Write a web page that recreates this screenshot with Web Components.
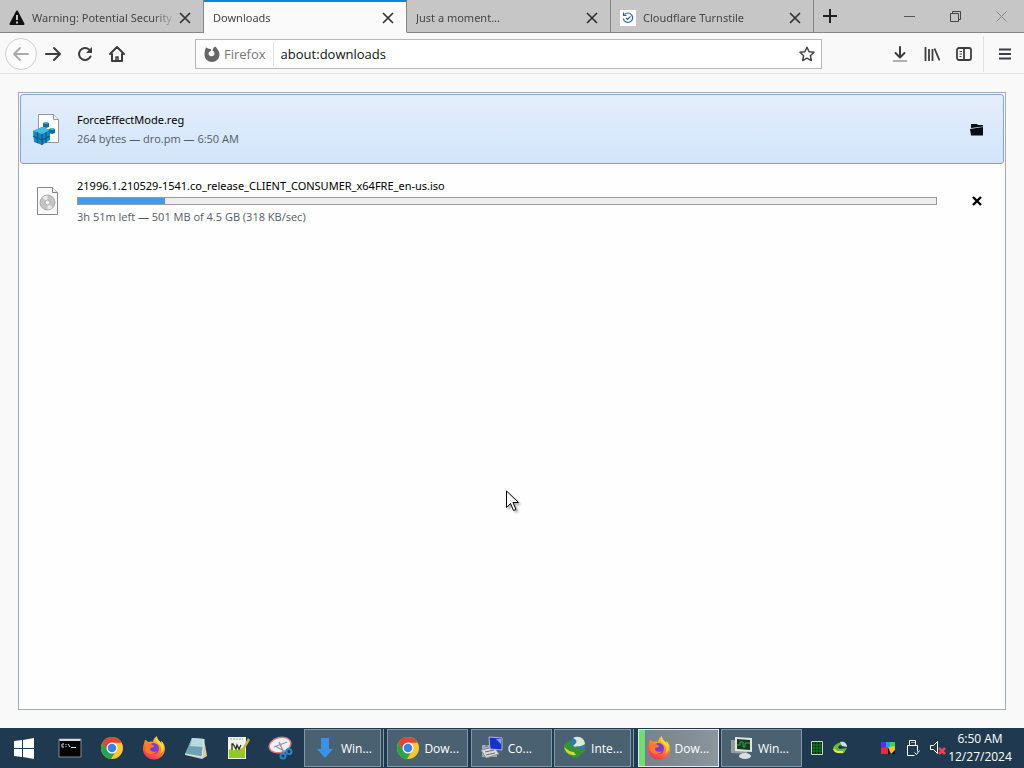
<!DOCTYPE html>
<html lang="en">
<head>
<meta charset="utf-8">
<title>Downloads</title>
<style>
html, body { margin: 0; height: 100%; }
body { font-family: "Open Sans", "Noto Sans", sans-serif; font-size: 12px; overflow: hidden; }
</style>
</head>
<body>
<desktop-screen></desktop-screen>

<script>
const define = (name, html) => {
  const template = document.createElement('template');
  template.innerHTML = html;
  customElements.define(name, class extends HTMLElement {
    constructor() {
      super();
      this.attachShadow({ mode: 'open' }).append(template.content.cloneNode(true));
    }
    connectedCallback() {
      const root = this.shadowRoot;
      const label = this.getAttribute('label');
      const button = root.querySelector('[data-label]');
      if (button && label) button.setAttribute('aria-label', label);
      const progress = root.querySelector('progress');
      if (progress) progress.value = Number(this.getAttribute('value'));
    }
  });
};

const chrome = `<svg width="24" height="24" viewBox="0 0 24 24" aria-hidden="true">
  <circle cx="12" cy="12" r="11" fill="#fbc82e"/>
  <path d="M2.500 6.500A11 11 0 0 0 11 23l5.500-9L12 12 8 14.500z" fill="#2ba24c"/>
  <path d="M2.500 6.500A11 11 0 0 1 21.600 6.700H12A5.500 5.500 0 0 0 7 14z" fill="#e24338"/>
  <circle cx="12" cy="12" r="5.500" fill="#fff"/><circle cx="12" cy="12" r="4.300" fill="#3b82e8"/></svg>`;

const firefox = `<svg width="24" height="24" viewBox="0 0 24 24" aria-hidden="true">
  <defs><linearGradient id="f" x1=".8" y1="0" x2=".3" y2="1"><stop offset="0" stop-color="#ffdf3d"/><stop offset=".45" stop-color="#ff8a25"/><stop offset="1" stop-color="#ef2f60"/></linearGradient></defs>
  <path d="M3 4C2 7 1 10 1 13a11 10.500 0 0 0 22 0c0-4-2-7-4-8l1 3c-2-3-5-4-5-8-3 2-4 4-4 6-2-1-4 0-4 0C5 6 5 4 3 4z" fill="url(#f)"/>
  <circle cx="11.500" cy="12.500" r="5.500" fill="#7d3bd1"/>
  <path d="M4 9c3-2 6-1 8 1 0 2-4 1-4 3s3 4 7 2c-2 4-10 4-12-1z" fill="#ff7b29"/>
  <path d="M15 1c-2 3-1 5 2 7 3 3 3 7 1 10 5-3 5-9 1-13l1 3c-2-3-5-4-5-7z" fill="#ffd83b"/></svg>`;

const closeX = `<svg width="12" height="12" viewBox="0 0 12 12" aria-hidden="true"><path d="M1.500 1.500l9 9M10.500 1.500l-9 9" stroke="#333" stroke-width="1.700" stroke-linecap="round"/></svg>`;

define('tab-item', `<style>
  :host { display: flex; box-sizing: border-box; flex: 0 1 203px; min-width: 0; align-items: center; gap: 7px; padding: 3px 10px 0 9px; border-right: 1px solid #858585; border-bottom: 1px solid #858585; color: #454545; font-family: "Noto Sans", sans-serif; font-size: 11px; }
  :host([first]) { flex-basis: 204px; }
  :host([active]) { background: #fafafa; border-top: 2px solid #1680dc; border-bottom-color: #fafafa; padding-top: 1px; }
  .title { flex: 1; min-width: 0; padding: 0; border: 0; background: none; font: inherit; color: inherit; text-align: left; white-space: nowrap; overflow: hidden; -webkit-mask-image: linear-gradient(to left, transparent, #000 24px); mask-image: linear-gradient(to left, transparent, #000 24px); line-height: 20px; }
  .close { display: flex; padding: 2px; margin-left: -7px; border: 0; background: none; }
  ::slotted(svg) { flex: none; display: block; }
</style><slot name="icon"></slot><button class="title" role="tab"><slot></slot></button><button class="close" aria-label="Close tab">${closeX}</button>`);

define('tool-button', `<style>
  :host { display: flex; flex: none; width: 32px; height: 32px; }
  button { flex: 1; display: flex; align-items: center; justify-content: center; padding: 0; border: 0; background: none; color: #3d3d3f; }
  :host([round]) button { box-sizing: border-box; border: 1px solid #cfcfcf; border-radius: 50%; background: #fcfcfc; color: #aaa; }
  :host([wide]) { width: 46px; }
</style><button data-label><slot></slot></button>`);

define('tab-strip', `<style>
  :host { display: flex; height: 33px; background: #c6c6c6; }
  .rest { flex: 1; display: flex; align-items: stretch; justify-content: space-between; border-bottom: 1px solid #858585; }
  .controls { display: flex; }
</style>
<tab-item first><svg slot="icon" width="16" height="16" viewBox="0 0 16 16" aria-hidden="true"><path d="M8 1.500L14.500 14h-13z" fill="#111" stroke="#111" stroke-width="2" stroke-linejoin="round"/><path d="M8 5v5M8 11.500v2" stroke="#ddd" stroke-width="1.800"/></svg>Warning: Potential Security</tab-item>
<tab-item active>Downloads</tab-item>
<tab-item first>Just a moment...</tab-item>
<tab-item><svg slot="icon" width="16" height="16" viewBox="0 0 16 16" aria-hidden="true"><path fill="#fff" d="M0 0h16v16H0z"/><path d="M4.500 4.500A4.700 4.700 0 1 1 3.300 8.500M3.500 2.500v3h3M6 8l1.500 1.500 3-3" fill="none" stroke="#2f5fae" stroke-width="1.200"/></svg>Cloudflare Turnstile</tab-item>
<div class="rest">
  <tool-button label="Open a new tab"><svg width="14" height="14" viewBox="0 0 14 14"><path d="M7 0v14M0 7h14" stroke="#222" stroke-width="2"/></svg></tool-button>
  <div class="controls">
    <tool-button wide label="Minimize"><svg width="11" height="11" viewBox="0 0 11 11"><path d="M0 5.500h11" stroke="#555"/></svg></tool-button>
    <tool-button wide label="Restore"><svg width="11" height="11" viewBox="0 0 11 11" fill="none" stroke="#444"><path d="M.500 2.500h8v8h-8zM2.500 2.500v-2h8v8h-2"/></svg></tool-button>
    <tool-button wide label="Close"><svg width="11" height="11" viewBox="0 0 11 11"><path d="M.500.500l10 10M10.500.500l-10 10" stroke="#888"/></svg></tool-button>
  </div>
</div>`);

define('url-bar', `<style>
  :host { display: flex; box-sizing: border-box; height: 30px; align-items: center; border: 1px solid #b8b8b8; background: #fff; min-width: 0; padding: 0 6px 0 8px; }
  .identity { display: flex; align-items: center; gap: 4px; height: 24px; padding-right: 7px; border-right: 1px solid #e0e0e0; font-size: 13px; color: #767676; }
  input { flex: 1; min-width: 0; border: 0; outline: 0; padding: 0 7px; background: none; font: 13px "Open Sans", "Noto Sans", sans-serif; color: #111; }
  button { display: flex; padding: 0; border: 0; background: none; }
</style>
<div class="identity"><svg width="16" height="16" viewBox="0 0 16 16" aria-hidden="true"><path d="M2 1.500c1 0 1.500 1 2.500 1.300C6 2.500 7 3 7.500 4L6 5.500c-1.500.500-2 2-1 3.500 1.500 2 5 1.500 5.500-1 .300-2-1-3-2-3.500C9 2 10 1 11.500.500 12 2 15.500 4 15.500 8.500 15.500 13 12 16 8 16S.500 13 .500 8.500C.500 6 1 3.500 2 1.500z" fill="#666"/></svg><span>Firefox</span></div>
<input aria-label="Address" value="about:downloads">
<button aria-label="Bookmark this page"><svg width="16" height="16" viewBox="0 0 16 16" aria-hidden="true"><path d="M8 1.200l2.100 4.500 4.900.600-3.600 3.400.900 4.900L8 12.200l-4.300 2.400.900-4.900L1 6.300l4.900-.600z" fill="none" stroke="#444" stroke-width="1.500" stroke-linejoin="round"/></svg></button>`);

define('nav-bar', `<style>
  :host { display: flex; box-sizing: border-box; height: 41px; align-items: center; padding: 1px 3px 0 5px; background: #f9f9fa; border-bottom: 1px solid #e4e4e4; }
  .group { display: flex; }
  url-bar { flex: 1; margin: 0 62px; }
  .menu { display: flex; align-items: center; height: 36px; padding-left: 5px; margin-left: 3px; border-left: 1px solid #e2e2e2; }
</style>
<div class="group">
  <tool-button round label="Back"><svg width="18" height="16" viewBox="0 0 18 16" fill="none" stroke="currentColor" stroke-width="1.800" stroke-linecap="round" stroke-linejoin="round"><path d="M16 8H2M8 2L2 8l6 6"/></svg></tool-button>
  <tool-button label="Forward"><svg width="16" height="16" viewBox="0 0 16 16" fill="none" stroke="currentColor" stroke-width="2" stroke-linecap="round" stroke-linejoin="round"><path d="M1 8h14M9 2l6 6-6 6"/></svg></tool-button>
  <tool-button label="Reload"><svg width="16" height="16" viewBox="0 0 16 16" fill="none" stroke="currentColor" stroke-width="2" stroke-linecap="round"><path d="M13.500 10.500A6 6 0 1 1 12 3.500"/><path d="M15 1v6H9z" fill="currentColor" stroke="none"/></svg></tool-button>
  <tool-button label="Home"><svg width="16" height="16" viewBox="0 0 16 16" fill="none" stroke="currentColor" stroke-width="2" stroke-linecap="round" stroke-linejoin="round"><path d="M1 8l7-7 7 7M3 8v7h10V8"/><path d="M7 15v-4h2v4" stroke-width="1.500"/></svg></tool-button>
</div>
<url-bar></url-bar>
<div class="group">
  <tool-button label="Downloads"><svg width="16" height="18" viewBox="0 0 16 18" fill="none" stroke="currentColor" stroke-width="2" stroke-linecap="round" stroke-linejoin="round"><path d="M8 2v10M3.500 8L8 12.500 12.500 8"/><path d="M1.500 16h13" stroke="#999" stroke-width="1.500"/></svg></tool-button>
  <tool-button label="Library"><svg width="16" height="16" viewBox="0 0 16 16" fill="none" stroke="currentColor" stroke-width="1.800"><path d="M1.500 1v14M5 3v12M8.500 3v12M10.500 2.500l5 12"/></svg></tool-button>
  <tool-button label="Sidebars"><svg width="16" height="16" viewBox="0 0 16 16" fill="none" stroke="currentColor" stroke-width="1.800"><rect x="1" y="2" width="14" height="12" rx="2"/><path d="M8 2v12"/><path d="M3.500 5.500h2.500M3.500 8h2.500M3.500 10.500h2" stroke-width="1"/></svg></tool-button>
</div>
<div class="menu"><tool-button label="Open menu"><svg width="14" height="14" viewBox="0 0 14 14"><path d="M1 2.500h12M1 7h12M1 11.500h12" stroke="#3d3d3f" stroke-width="2"/></svg></tool-button></div>`);

define('download-item', `<style>
  :host { display: flex; box-sizing: border-box; height: 70px; align-items: center; border: 1px solid transparent; border-radius: 3px; }
  :host([selected]) { border-color: #7da2ce; background: linear-gradient(#e6eefb, #dbeafb 45%, #d3e5fa); }
  .icon { display: flex; justify-content: center; width: 51px; margin-right: 5px; }
  .text { flex: 1; min-width: 0; display: flex; flex-direction: column; padding-top: 2px; }
  .name { font-family: "Noto Sans", sans-serif; font-size: 11px; line-height: 18px; color: #000; }
  .details { font-size: 11px; line-height: 20px; color: #545b66; }
  progress { display: none; appearance: none; -webkit-appearance: none; box-sizing: border-box; width: 100%; height: 8px; margin: 2px 0; border: 1px solid #999; background: #eee; }
  progress::-webkit-progress-bar { background: #eee; }
  progress::-webkit-progress-value { background: #3e9bef; }
  progress::-moz-progress-bar { background: #3e9bef; }
  :host([value]) progress { display: block; }
  :host([value]) { height: 74px; }
  .action { width: 66px; display: flex; justify-content: center; }
  .action tool-button { margin-left: 14px; }
</style>
<div class="icon"><slot name="icon"></slot></div>
<div class="text"><span class="name"><slot></slot></span><progress max="100" aria-label="Download progress"></progress><span class="details"><slot name="details"></slot></span></div>
<div class="action"><tool-button label="Download action"><slot name="action"></slot></tool-button></div>`);

define('downloads-view', `<style>
  :host { display: flex; flex: 1; min-height: 0; background: #f9f9fa; padding: 18px; }
  main { flex: 1; min-width: 0; border: 1px solid #a5aab2; background: #fefefe; padding: 1px; }
</style>
<main>
<download-item selected>
  <svg slot="icon" width="30" height="32" viewBox="0 0 30 32" aria-hidden="true"><path d="M6.500 1.500h15l5 5v23h-20z" fill="#fff" stroke="#92979d"/><path d="M21.500 1.500v5h5" fill="#eee" stroke="#92979d"/><path d="M1 18l9-4 8 3v10l-8 5-8-3z" fill="#1688bd"/><path d="M1 18l9-4 8 3-8 4z" fill="#46bae0"/><path d="M10 21v11M5.500 19v11M14 19v11M1 23l9 4 8-4" stroke="#075b8d" stroke-width="1.200" fill="none"/><path d="M11 10l3-1 3 1v4l-3 1-3-1zM17 16l3-1 3 1v4l-3 1-3-1z" fill="#126d98"/><path d="M11 10l3-1 3 1-3 1zM17 16l3-1 3 1-3 1z" fill="#55bad9"/></svg>
  ForceEffectMode.reg
  <span slot="details">264 bytes — dro.pm — 6:50 AM</span>
  <svg slot="action" width="14" height="13" viewBox="0 0 14 13" aria-hidden="true"><path d="M1 1h6l1 1h5v1.500L1 5zM0 6l13-2v8.500H1z" fill="#080d14"/></svg>
</download-item>
<download-item value="10.100">
  <svg slot="icon" width="30" height="32" viewBox="0 0 30 32" aria-hidden="true"><path d="M5.500 2.500h15l5 5v22h-20z" fill="#fafafa" stroke="#85888a"/><path d="M20.500 2.500v5h5" fill="#eee" stroke="#85888a"/><circle cx="15.500" cy="17.500" r="7.500" fill="#c4c4c4" stroke="#aaa"/><path d="M15.500 17.500l-5-5a7 7 0 0 1 5-2zM15.500 17.500l5 5a7 7 0 0 1-5 2z" fill="#e9e9e9"/><circle cx="15.500" cy="17.500" r="2.500" fill="#f5f5f5" stroke="#aaa"/></svg>
  21996.1.210529-1541.co_release_CLIENT_CONSUMER_x64FRE_en-us.iso
  <span slot="details">3h 51m left — 501 MB of 4.5 GB (318 KB/sec)</span>
  <svg slot="action" width="12" height="12" viewBox="0 0 12 12" aria-hidden="true"><path d="M2 2l8 8M10 2l-8 8" stroke="#000" stroke-width="2.400"/></svg>
</download-item>
</main>`);

define('launch-button', `<style>
  :host { display: flex; flex: none; width: 42px; }
  :host([start]) { margin-right: 4px; }
  button { flex: 1; display: flex; align-items: center; justify-content: center; padding: 0; border: 0; background: none; }
</style><button data-label><slot></slot></button>`);

define('task-button', `<style>
  :host { display: flex; flex: 0 1 81px; min-width: 0; box-sizing: border-box; }
  button { flex: 1; min-width: 0; box-sizing: border-box; display: flex; align-items: center; gap: 4px; padding: 0 8px; border: 1px solid #8297a6; background: #4a6172; color: #fff; font: inherit; text-align: left; }
  span { white-space: nowrap; overflow: hidden; }
  :host([stacked]) button { margin-right: 4px; box-shadow: 2px 0 #2b4559, 3px 0 #8297a6; }
  :host([active]) button { border-color: #e6eaed; background: linear-gradient(90deg, #6fdc74 6px, #77828c 6px, #8b959d); }
</style><button><slot name="icon"></slot><span><slot></slot></span></button>`);

define('tray-clock', `<style>
  :host { display: flex; flex-direction: column; align-items: center; justify-content: center; width: 66px; color: #fff; line-height: 18px; }
  time { white-space: nowrap; }
</style><time>6:50 AM</time><time datetime="2024-12-27">12/27/2024</time>`);

define('task-bar', `<style>
  :host { display: flex; height: 40px; background: #1f3a50; padding-left: 3px; }
  .launch { display: flex; margin-right: 3px; }
  .tasks { display: flex; flex: 0 1 498px; gap: 2px; min-width: 0; justify-content: space-between; padding: 1px 0; }
  .tray { flex: 1; display: flex; align-items: center; padding-left: 7px; }
  .tray svg { flex: none; }
  .gap { flex: 1; }
  .right { display: flex; gap: 9px; margin-right: 1px; }
  .left { display: flex; gap: 7px; }
  tray-clock { margin-right: 11px; align-self: stretch; }
</style>
<nav class="launch" aria-label="Quick launch">
  <launch-button start label="Start"><svg width="22" height="22" viewBox="0 0 22 22"><path d="M1 4l8-1v8H1zM10 3l11-2v10H10zM1 12h8v8l-8-1zM10 12h11v10l-11-2z" fill="#fff"/></svg></launch-button>
  <launch-button label="Command Prompt"><svg width="24" height="20" viewBox="0 0 24 20"><path d="M1 1h22v18H1z" fill="#050505" stroke="#848a8e"/><path d="M1.500 1h21v2h-21z" fill="#d5d9db"/><path d="M6 6H4v3h2M8 6v1M8 8v1M10 6l2 3M13 9.500h5" fill="none" stroke="#ddd"/></svg></launch-button>
  <launch-button label="Chrome">${chrome}</launch-button>
  <launch-button label="Firefox">${firefox}</launch-button>
  <launch-button label="Notepad"><svg width="24" height="24" viewBox="0 0 24 24"><path d="M8 2l12 1 3 17-5 3-17-4z" fill="#d8cda8"/><path d="M8 2l12 1-2 18-17-3z" fill="#6fa3b3"/><path d="M8 2l12 1-1 8-13-1z" fill="#b8dbe2"/><path d="M1 18l17 3 2-18" fill="none" stroke="#d9e8ec"/></svg></launch-button>
  <launch-button label="Notepad++"><svg width="24" height="24" viewBox="0 0 24 24"><path d="M2 1h18v22H2z" fill="#f2f4ec"/><path d="M4 3h13" stroke="#9aa" stroke-dasharray="2 1"/><path d="M3 13c5 3 11 0 16-2v11H3z" fill="#8ecb22"/><path d="M6 14V8h1l3 5 1-4 2 4 2-4" fill="none" stroke="#253120" stroke-width="1.300"/><path d="M22 2l-7 13-1 3 3-2 7-12z" fill="#c4b33a"/></svg></launch-button>
  <launch-button label="Snipping Tool"><svg width="25" height="24" viewBox="0 0 25 24"><ellipse cx="12" cy="9" rx="11" ry="7.500" transform="rotate(-15 12 9)" fill="#eef1f3" stroke="#d97982" stroke-width="1.500"/><path d="M6 11l13-5M11 6l5 11M7 10l11 6" stroke="#8998a7" stroke-width="1.300"/><circle cx="15" cy="20" r="2.500" fill="none" stroke="#2387ca" stroke-width="2"/><circle cx="21" cy="15.500" r="2.500" fill="none" stroke="#2387ca" stroke-width="2"/></svg></launch-button>
</nav>
<div class="tasks">
  <task-button stacked><svg slot="icon" width="24" height="24" viewBox="0 0 24 24"><path d="M8 2h8v11h4l-8 9-8-9h4z" fill="#3b91e4"/></svg>Win...</task-button>
  <task-button>${chrome.replace('<svg', '<svg slot="icon"')}Dow...</task-button>
  <task-button><svg slot="icon" width="24" height="24" viewBox="0 0 24 24"><path d="M2 9h15v12H2z" fill="#a7adae"/><path d="M1 14l13-3 5 7-13 4z" fill="#d9dcd9" stroke="#838b8b"/><path d="M9 1l13 1v12l-12-1z" fill="#1433c7" stroke="#b5bdc4"/><path d="M16 3l5 0v5z" fill="#91a6ef"/><path d="M5 16l9-2M6 19l9-2M5 10h3" stroke="#667"/></svg>Co...</task-button>
  <task-button stacked><svg slot="icon" width="24" height="24" viewBox="0 0 24 24"><circle cx="14" cy="10" r="8.500" fill="#347aa9"/><path d="M10 2c5 2 4 5 1 7s6 3 11-1c0-6-7-9-12-6z" fill="#dbe8d4"/><path d="M1 9c3-4 8-5 10-3-5 0-4 4 0 6l4-2 1 4 7 0-9 8c-7 0-10-6-13-6z" fill="#38922d"/><path d="M1 11c3 2 5 5 10 5l2 3c-6 1-10-2-12-8z" fill="#d2da3b"/></svg>Inte...</task-button>
  <task-button active>${firefox.replace('<svg', '<svg slot="icon"')}Dow...</task-button>
  <task-button><svg slot="icon" width="24" height="24" viewBox="0 0 24 24"><path d="M1 4l16 1v13L1 17z" fill="#969c9a"/><path d="M5 1l17 1v14L5 15z" fill="#e1e5df"/><path d="M7 3l13 1v10L7 13z" fill="#163b20"/><path d="M7 9h3V6h3v5h2V7h5" stroke="#38a348" fill="none"/><ellipse cx="15" cy="20" rx="6" ry="3" fill="#d6dfe3"/></svg>Win...</task-button>
</div>
<div class="tray">
  <div class="left">
    <svg width="16" height="16" viewBox="0 0 16 16"><path d="M2.500 1.500h11v13h-11z" fill="#072c0d" stroke="#ced8d0"/><path d="M5 2v12M8 2v12M11 2v12M3 5h10M3 8h10M3 11h10" stroke="#148028"/></svg>
    <svg width="16" height="16" viewBox="0 0 16 16"><path d="M1 8c3-6 9-6 11-5l-2 2c-4 0-5 3-2 4l7-1-3 5C6 14 1 12 1 8z" fill="#67b83b"/><path d="M8 2c4-1 7 1 7 5l-5-1z" fill="#caddeb"/><path d="M2 9c2 4 5 3 9 3" stroke="#e7e64d" stroke-width="2" fill="none"/></svg>
  </div>
  <div class="gap"></div>
  <div class="right">
    <svg width="16" height="16" viewBox="0 0 16 16"><path d="M1 2h5v6H1z" fill="#5831d8"/><path d="M6 2h4v6H6z" fill="#00aee0"/><path d="M10 2h5v6h-5z" fill="#43cf54"/><path d="M1 8l7-1v7H1z" fill="#e22a49"/><path d="M8 7l7 1v6H8z" fill="#111"/><path d="M8 7l7-1v4l-4 4z" fill="#f0c531"/></svg>
    <svg width="16" height="16" viewBox="0 0 16 16" fill="none" stroke="#fff"><path d="M4.500 5V.500h6V5M2.500 5.500h10v6M2.500 5.500v10h7M6.500 2.500h1M8.500 2.500h1"/><path d="M9.500 12.500l2 2 3-4" /></svg>
    <svg width="16" height="16" viewBox="0 0 16 16" fill="none" stroke="#fff"><path d="M.500 5.500h3l4-4v12l-4-4h-3z"/><path d="M9 8l6 6M15 8l-6 6" stroke="#ee4257" stroke-width="2.500"/></svg>
  </div>
  <tray-clock></tray-clock>
</div>`);

define('desktop-screen', `<style>
  :host { display: flex; flex-direction: column; min-height: 100vh; }
  .pointer { position: fixed; left: 506px; top: 490px; pointer-events: none; filter: drop-shadow(2px 2px 1px rgba(0,0,0,.3)); }
</style>
<tab-strip></tab-strip><nav-bar></nav-bar><downloads-view></downloads-view><task-bar></task-bar>
<svg class="pointer" width="13" height="22" viewBox="0 0 13 22" aria-hidden="true"><path d="M.500 1v16.500l4-4 3 7 2.500-1-3-7h5.500z" fill="#fff" stroke="#000"/></svg>`);
</script>
</body>
</html>
